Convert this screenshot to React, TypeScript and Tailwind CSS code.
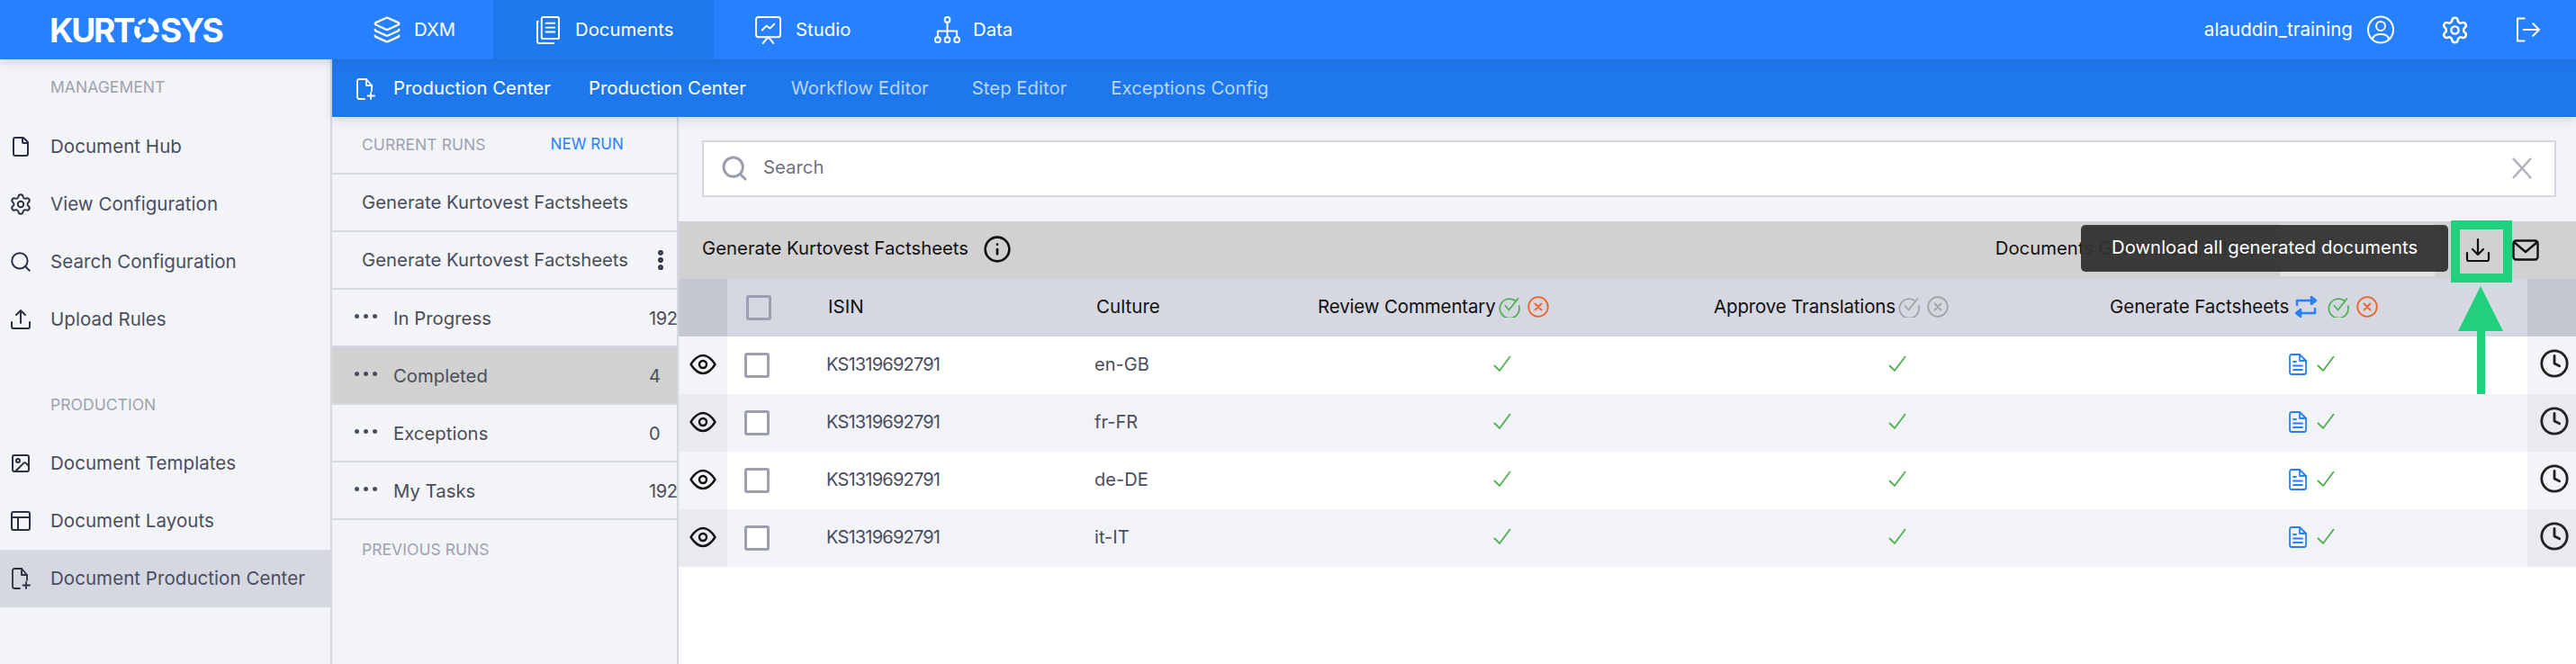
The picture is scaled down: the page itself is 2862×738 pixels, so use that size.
import React from "react";
import { File, Settings, Search, Image, Clock, Info, Layers, MoreVertical } from "lucide-react";

type P = { className?: string };

const DocPlus = ({ className }: P) => (
  <svg viewBox="0 0 21 24" fill="none" stroke="currentColor" strokeWidth="1.8" strokeLinecap="round" strokeLinejoin="round" className={className}>
    <path d="M9 23H3a2 2 0 0 1-2-2V3a2 2 0 0 1 2-2h8l6 7v6" />
    <path d="M11 1v7h6" />
    <path d="M16 16v7M12.500 19.500h7.500" />
  </svg>
);
const Docs = ({ className }: P) => (
  <svg viewBox="0 0 28 32" fill="none" stroke="currentColor" strokeWidth="2" strokeLinecap="round" strokeLinejoin="round" className={className}>
    <rect x="7" y="1" width="20" height="25" rx="2" />
    <path d="M12 8h10M12 13h10M12 18h10" />
    <path d="M3 6H2v23a2 2 0 0 0 2 2h17" />
  </svg>
);
const Studio = ({ className }: P) => (
  <svg viewBox="0 0 30 32" fill="none" stroke="currentColor" strokeWidth="2" strokeLinecap="round" strokeLinejoin="round" className={className}>
    <rect x="1" y="1" width="28" height="23" rx="3" />
    <path d="M8 16l5-5 4 3 5-5" />
    <path d="M15 24l-6 7M15 24l6 7" />
  </svg>
);
const DataTree = ({ className }: P) => (
  <svg viewBox="0 0 30 32" fill="none" stroke="currentColor" strokeWidth="2" strokeLinecap="round" strokeLinejoin="round" className={className}>
    <circle cx="15" cy="4" r="3" />
    <circle cx="4" cy="27" r="3" />
    <circle cx="15" cy="27" r="3" />
    <circle cx="26" cy="27" r="3" />
    <path d="M15 7v17M4 24v-7h22v7" />
  </svg>
);
const UserRing = ({ className }: P) => (
  <svg viewBox="0 0 30 32" fill="none" stroke="currentColor" strokeWidth="2" strokeLinecap="round" className={className}>
    <ellipse cx="15" cy="16" rx="14" ry="14.5" />
    <circle cx="15" cy="12" r="5" />
    <path d="M6 26c1-4 4-5 9-5s8 1 9 5" />
  </svg>
);
const LogoutI = ({ className }: P) => (
  <svg viewBox="0 0 28 28" fill="none" stroke="currentColor" strokeWidth="2" strokeLinecap="round" strokeLinejoin="round" className={className}>
    <path d="M10 1H2v26h8" />
    <path d="M9 14h18M20 7l7 7-7 7" />
  </svg>
);
const TrayUp = ({ className }: P) => (
  <svg viewBox="0 0 24 24" fill="none" stroke="currentColor" strokeWidth="2" strokeLinecap="round" strokeLinejoin="round" className={className}>
    <path d="M2 15v5a2 2 0 0 0 2 2h16a2 2 0 0 0 2-2v-5" />
    <path d="M12 16V2M7 7l5-5 5 5" />
  </svg>
);
const TrayDown = ({ className }: P) => (
  <svg viewBox="0 0 28 28" fill="none" stroke="currentColor" strokeWidth="2.2" strokeLinecap="round" strokeLinejoin="round" className={className}>
    <path d="M2 17v7a2 2 0 0 0 2 2h20a2 2 0 0 0 2-2v-7" />
    <path d="M14 19V2M8 13l6 6 6-6" />
  </svg>
);
const LayoutI = ({ className }: P) => (
  <svg viewBox="0 0 24 24" fill="none" stroke="currentColor" strokeWidth="2" strokeLinejoin="round" className={className}>
    <rect x="2" y="2" width="20" height="20" rx="2" />
    <path d="M2 8h20M9 8v14" />
  </svg>
);
const EyeHex = ({ className }: P) => (
  <svg viewBox="0 0 30 24" fill="none" stroke="currentColor" strokeWidth="2.4" strokeLinejoin="round" className={className}>
    <path d="M1.500 12C6 5 10 2 15 2s9 3 13.500 10C24 19 20 22 15 22S6 19 1.500 12z" />
    <circle cx="15" cy="12" r="4" />
  </svg>
);
const MailI = ({ className }: P) => (
  <svg viewBox="0 0 30 24" fill="none" stroke="currentColor" strokeWidth="2.4" strokeLinejoin="round" className={className}>
    <rect x="1.500" y="1.500" width="27" height="21" rx="3" />
    <path d="M2 3l13 11L28 3" />
  </svg>
);
const RepeatI = ({ className }: P) => (
  <svg viewBox="0 0 24 24" fill="none" stroke="currentColor" strokeWidth="2.4" strokeLinejoin="round" className={className}>
    <path d="M2 11V5h17" />
    <path d="M18 1l5 4-5 4z" fill="currentColor" />
    <path d="M22 13v6H5" />
    <path d="M6 15l-5 4 5 4z" fill="currentColor" />
  </svg>
);
const CircleCheck = ({ className }: P) => (
  <svg viewBox="0 0 24 24" fill="none" stroke="currentColor" strokeWidth="1.700" strokeLinecap="round" className={className}>
    <path d="M19 5.500A10.800 10.800 0 1 0 22.600 11" />
    <path d="M7.500 11l4 4.500L21.500 3" />
  </svg>
);
const CircleX = ({ className }: P) => (
  <svg viewBox="0 0 24 24" fill="none" stroke="currentColor" strokeWidth="1.800" strokeLinecap="round" className={className}>
    <circle cx="12" cy="12" r="10.800" />
    <path d="M8.500 8.500l7 7M15.500 8.500l-7 7" />
  </svg>
);
const Tick = ({ className }: P) => (
  <svg viewBox="0 0 20 20" fill="none" stroke="currentColor" strokeWidth="1.800" className={className}>
    <path d="M1 11l6 6L19 1" />
  </svg>
);
const DocBlue = ({ className }: P) => (
  <svg viewBox="0 0 20 24" fill="none" stroke="currentColor" strokeWidth="1.800" strokeLinecap="round" strokeLinejoin="round" className={className}>
    <path d="M3 1h9l7 7v13a2 2 0 0 1-2 2H3a2 2 0 0 1-2-2V3a2 2 0 0 1 2-2z" />
    <path d="M12 1v7h7" />
    <path d="M5 9h3M5 13.500h10M5 18h10" />
  </svg>
);
const CloseX = ({ className }: P) => (
  <svg viewBox="0 0 24 24" fill="none" stroke="currentColor" strokeWidth="2.500" className={className}>
    <path d="M2 1l20 22M22 1L2 23" />
  </svg>
);
const LogoO = () => (
  <svg viewBox="0 0 32 32" fill="none" stroke="white" strokeWidth="6.500" className="w-[28px] h-[28px] mx-[1px]">
    <path d="M18 3.900A12.500 12.500 0 0 1 28 19" />
    <path d="M27 22a12.500 12.500 0 0 1-17 6" />
    <path d="M7 25.500A12.500 12.500 0 0 1 4.500 12" />
    <path d="M6 9a12.500 12.500 0 0 1 8.500-5" strokeWidth="4" />
  </svg>
);

const Nav = ({ icon, label, active, w }: { icon: React.ReactNode; label: string; active?: boolean; w: string }) => (
  <div className={`flex items-center h-full ${w} ${active ? "bg-[#1f78ec]" : ""}`}>
    {icon}
    <span className="text-white text-[20.250px] leading-none">{label}</span>
  </div>
);

const SideItem = ({ icon, label, active }: { icon: React.ReactNode; label: string; active?: boolean }) => (
  <div className={`flex items-center h-[64px] ${active ? "bg-[#d5d7e1]" : ""}`}>
    <div className="w-[56px] flex justify-center pr-[10px] text-[#2c2f3f]">{icon}</div>
    <span className="text-[20.500px] text-[#4a4d5f]">{label}</span>
  </div>
);

const RunRow = ({ label, count, active }: { label: string; count: string; active?: boolean }) => (
  <div className={`flex items-center h-[64px] border-b-2 border-[#d5d7e1] ${active ? "bg-[#d1d1d1]" : ""}`}>
    <div className="w-[50px] flex justify-end gap-[5px] shrink-0 -mt-[4px]">
      <span className="w-[5px] h-[5px] rounded-full bg-[#4a4d5f]" />
      <span className="w-[5px] h-[5px] rounded-full bg-[#4a4d5f]" />
      <span className="w-[5px] h-[5px] rounded-full bg-[#4a4d5f]" />
    </div>
    <span className="ml-[18px] text-[20.250px] text-[#4a4d58] flex-1 pt-[2px]">{label}</span>
    <span className="text-[20px] text-[#4a4d58] w-[31px] shrink-0 whitespace-nowrap tracking-[-0.4px] pt-[2px]">{count}</span>
  </div>
);

const Row = ({ culture, alt }: { culture: string; alt?: boolean }) => (
  <div className={`grid grid-cols-[54px_110px_298px_248px_440px_440px_464px_54px] h-[64px] items-center ${alt ? "bg-[#f2f3f7]" : "bg-white"}`}>
    <div className={`h-full flex items-center justify-center pb-[2px] ${alt ? "bg-[#e9eaf0]" : "bg-[#f3f4f8]"}`}>
      <EyeHex className="w-[30px] h-[24px] text-[#111]" />
    </div>
    <div className="pl-[19px]">
      <div className="w-[28px] h-[28px] rounded-[3px] border-[3px] border-[#9d9fb0] bg-white" />
    </div>
    <div className="text-[20px] text-[#4a4d5f] tracking-[-0.8px] pb-[2px]">KS1319692791</div>
    <div className="text-[20px] text-[#4a4d5f] pb-[2px]">{culture}</div>
    <div className="pl-[195px] pb-[2px]"><Tick className="w-[20px] h-[20px] text-[#4caf50]" /></div>
    <div className="pl-[194px] pb-[2px]"><Tick className="w-[20px] h-[20px] text-[#4caf50]" /></div>
    <div className="pl-[199px] flex items-center gap-[11px] pb-[2px]">
      <DocBlue className="w-[20px] h-[24px] text-[#2680ff]" />
      <Tick className="w-[20px] h-[20px] text-[#4caf50]" />
    </div>
    <div className={`h-full flex items-center justify-start pl-[13px] pb-[4px] ${alt ? "bg-[#e9eaf0]" : "bg-[#f3f4f8]"}`}>
      <Clock className="w-[34px] h-[34px] text-[#222]" strokeWidth={2} />
    </div>
  </div>
);

const cultures = ["en-GB", "fr-FR", "de-DE", "it-IT"];

export default function App() {
  return (
    <div className="relative w-[2862px] h-[738px] overflow-hidden bg-white font-['Inter',sans-serif] tracking-[0.05px]">
      {/* top bar */}
      <header className="relative z-20 h-[66px] bg-[#2680ff] flex items-center shadow-[0_3px_10px_rgba(60,70,110,0.18)]">
        <div className="w-[414px] shrink-0 pl-[55px] flex items-center text-white text-[37px] leading-none font-bold tracking-[-2.4px]">
          <span>KURT</span>
          <LogoO />
          <span>SYS</span>
        </div>
        <Nav w="w-[134px]" label="DXM" icon={<Layers className="w-[32px] h-[32px] text-white mr-[14px]" strokeWidth={1.7} />} />
        <Nav w="w-[245px] pl-[47px]" active label="Documents" icon={<Docs className="w-[27px] h-[31px] text-white mr-[17px]" />} />
        <Nav w="w-[245px] pl-[46px]" label="Studio" icon={<Studio className="w-[29px] h-[31px] text-white mr-[16px]" />} />
        <Nav w="w-[180px]" label="Data" icon={<DataTree className="w-[29px] h-[31px] text-white mr-[14px]" />} />
        <div className="ml-auto flex items-center pr-[40px]">
          <span className="text-white text-[20.500px]">alauddin_training</span>
          <UserRing className="w-[30px] h-[32px] text-white ml-[16px]" />
          <Settings className="w-[33px] h-[33px] text-white ml-[51px]" strokeWidth={1.8} />
          <LogoutI className="w-[27px] h-[28px] text-white ml-[51px]" />
        </div>
      </header>

      <div className="flex h-[672px]">
        {/* sidebar */}
        <aside className="w-[369px] shrink-0 bg-[#f3f4f8] border-r-2 border-[#d5d7e1]">
          <div className="h-[65px] pl-[56px] pt-[20px] text-[17.500px] text-[#9ea1b1] leading-[22px]">MANAGEMENT</div>
          <SideItem icon={<File className="w-[24px] h-[28px]" strokeWidth={2} />} label="Document Hub" />
          <SideItem icon={<Settings className="w-[26px] h-[28px]" strokeWidth={1.8} />} label="View Configuration" />
          <SideItem icon={<Search className="w-[26px] h-[28px]" strokeWidth={1.8} />} label="Search Configuration" />
          <SideItem icon={<TrayUp className="w-[24px] h-[24px]" />} label="Upload Rules" />
          <div className="h-[96px] pl-[56px] pt-[52px] text-[17.500px] text-[#9ea1b1] leading-[22px]">PRODUCTION</div>
          <SideItem icon={<Image className="w-[24px] h-[24px]" strokeWidth={2} />} label="Document Templates" />
          <SideItem icon={<LayoutI className="w-[24px] h-[24px]" />} label="Document Layouts" />
          <SideItem active icon={<DocPlus className="w-[21px] h-[24px]" />} label="Document Production Center" />
        </aside>

        <div className="flex-1 flex flex-col min-w-0">
          {/* sub nav */}
          <nav className="relative z-10 h-[64px] shrink-0 bg-[#1e78ec] flex items-center pt-[1px] shadow-[0_3px_10px_rgba(60,70,110,0.18)] text-[20.250px]">
            <DocPlus className="w-[21px] h-[24px] text-white ml-[27px] mr-[20px]" />
            <span className="text-white">Production Center</span>
            <span className="text-white ml-[42px]">Production Center</span>
            <span className="text-[#b8d5fb] ml-[50px]">Workflow Editor</span>
            <span className="text-[#b8d5fb] ml-[48px]">Step Editor</span>
            <span className="text-[#b8d5fb] ml-[49px]">Exceptions Config</span>
          </nav>

          <div className="flex flex-1 min-h-0">
            {/* runs */}
            <section className="w-[385px] shrink-0 bg-[#f3f4f8] border-r-2 border-[#d5d7e1]">
              <div className="h-[64px] flex items-center pl-[33px] border-b-2 border-[#d5d7e1]">
                <span className="text-[17.500px] text-[#9ea1b1]">CURRENT RUNS</span>
                <span className="text-[17px] text-[#2680ff] ml-[72px]">NEW RUN</span>
              </div>
              <div className="h-[64px] flex items-center pl-[33px] border-b-2 border-[#d5d7e1] text-[20.250px] text-[#4a4d58]">Generate Kurtovest Factsheets</div>
              <div className="h-[64px] flex items-center pl-[33px] border-b-2 border-[#d5d7e1] text-[20.250px] text-[#4a4d58]">
                <span className="flex-1">Generate Kurtovest Factsheets</span>
                <MoreVertical className="w-[28px] h-[30px] text-[#2c2f3f] mr-[4px]" strokeWidth={3} />
              </div>
              <RunRow label="In Progress" count="192" />
              <RunRow label="Completed" count="4" active />
              <RunRow label="Exceptions" count="0" />
              <RunRow label="My Tasks" count="192" />
              <div className="pl-[33px] pt-[22px] text-[17.500px] text-[#9ea1b1] leading-[22px]">PREVIOUS RUNS</div>
            </section>

            {/* main */}
            <main className="flex-1 min-w-0 bg-white flex flex-col">
              <div className="h-[116px] shrink-0 bg-[#f3f4f8] pt-[26px] pl-[26px] pr-[22px]">
                <div className="h-[63px] bg-white border-2 border-[#d5d7e1] flex items-center pl-[18px] pr-[24px] pb-[2px]">
                  <Search className="w-[32px] h-[32px] text-[#9a9dad]" strokeWidth={2.2} />
                  <span className="ml-[16px] text-[20.250px] text-[#70727f] flex-1">Search</span>
                  <CloseX className="w-[24px] h-[24px] text-[#b0b2bd]" />
                </div>
              </div>

              <div className="h-[64px] shrink-0 bg-[#d1d1d1] flex items-center pl-[26px] text-[20.250px] text-[#111]">
                <span className="pb-[3px]">Generate Kurtovest Factsheets</span>
                <Info className="w-[32px] h-[32px] text-[#111] ml-[16px] mb-[3px]" strokeWidth={2} />
                <span className="ml-auto whitespace-nowrap pb-[3px]">Documents Generated (4/192)</span>
                <span className="w-[172px] h-[58px] bg-[#e2e2e2] ml-[26px] shrink-0" />
                <TrayDown className="w-[28px] h-[28px] text-[#111] ml-[34px] shrink-0" />
                <MailI className="w-[30px] h-[24px] text-[#111] ml-[24px] mr-[41px] shrink-0" />
              </div>

              <div className="grid grid-cols-[54px_110px_298px_248px_440px_440px_464px_54px] h-[64px] shrink-0 items-center bg-[#d5d7e1] text-[20.500px] text-[#111]">
                <div className="h-full bg-[#c5c8d3]" />
                <div className="pl-[21px]"><div className="w-[28px] h-[28px] rounded-[3px] border-[3px] border-[#9d9fb0]" /></div>
                <div className="pl-[2px] pb-[2px]">ISIN</div>
                <div className="pl-[2px] pb-[2px]">Culture</div>
                <div className="flex items-center pb-[2px] tracking-[-0.15px]">
                  <span>Review Commentary</span>
                  <CircleCheck className="w-[24px] h-[24px] text-[#4caf50] ml-[3px]" />
                  <CircleX className="w-[24px] h-[24px] text-[#f4622b] ml-[8px]" />
                </div>
                <div className="flex items-center pb-[2px] tracking-[-0.15px]">
                  <span>Approve Translations</span>
                  <CircleCheck className="w-[24px] h-[24px] text-[#a3a3a3] ml-[3px]" />
                  <CircleX className="w-[24px] h-[24px] text-[#a3a3a3] ml-[8px]" />
                </div>
                <div className="flex items-center pb-[2px] tracking-[-0.05px]">
                  <span>Generate Factsheets</span>
                  <RepeatI className="w-[24px] h-[24px] text-[#2680ff] ml-[7px]" />
                  <CircleCheck className="w-[24px] h-[24px] text-[#4caf50] ml-[12px]" />
                  <CircleX className="w-[24px] h-[24px] text-[#f4622b] ml-[8px]" />
                </div>
                <div className="h-full bg-[#c5c8d3]" />
              </div>

              {cultures.map((c, i) => (
                <Row key={c} culture={c} alt={i % 2 === 1} />
              ))}
            </main>
          </div>
        </div>
      </div>

      {/* tooltip overlay */}
      <div className="absolute z-30 left-[2312px] top-[250px] w-[408px] h-[52px] rounded-[5px] bg-[#323232]/95 flex items-center pl-[34px] pb-[2px] text-white text-[20.250px]">
        Download all generated documents
      </div>

      {/* annotation */}
      <div className="absolute z-30 left-[2723px] top-[245px] w-[68px] h-[69px] border-[10px] border-[#20d07c]" />
      <svg viewBox="0 0 50 120" className="absolute z-30 left-[2731px] top-[318px] w-[50px] h-[120px]">
        <path d="M25 0L50 50H30V120H21V50H0z" fill="#20d07c" />
      </svg>
    </div>
  );
}
